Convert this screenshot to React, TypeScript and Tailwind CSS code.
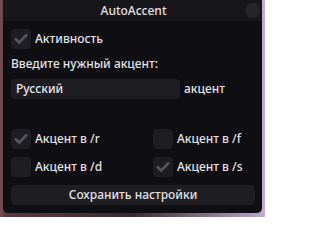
import React from "react";

function Check({ checked }: { checked: boolean }) {
  return (
    <div className="w-[20px] h-[20px] rounded-[4px] bg-[#1e1d22] flex items-center justify-center shrink-0">
      {checked && (
        <svg width="14" height="12" viewBox="0 0 14 12">
          <path d="M1.8 6.2 L5.2 9.6 L12.2 2.2" fill="none" stroke="#55545a" strokeWidth="2.8" strokeLinecap="round" strokeLinejoin="round" />
        </svg>
      )}
    </div>
  );
}

function CheckRow({ checked, label }: { checked: boolean; label: string }) {
  return (
    <div className="flex items-center h-[20px]">
      <Check checked={checked} />
      <span className="ml-[4px] leading-[20px]">{label}</span>
    </div>
  );
}

export default function App() {
  return (
    <div
      className="w-[265px] h-[217px] flex pl-[3px] pb-[4px] bg-[linear-gradient(90deg,#7a4f52_0%,#5a3a3c_2%,#3a2a30_50%,#b5a5c5_98%,#c2b2d0_100%)]"
      style={{ fontFamily: '"Noto Sans", sans-serif' }}
    >
      <div className="w-[259px] h-[213px] rounded-b-[5px] bg-[#0f0e12] text-[12px] font-medium text-[#e2e1e6] flex flex-col relative">
        <div className="h-[21px] bg-[#17161b] flex items-center justify-center shrink-0">
          <span className="leading-[21px] pl-[2px]">AutoAccent</span>
        </div>
        <div className="absolute right-[2px] top-[3px] w-[15px] h-[15px] rounded-full bg-[#26252a]" />
        <div className="flex flex-col px-[8px]">
          <div className="mt-[8px]">
            <CheckRow checked label="Активность" />
          </div>
          <div className="mt-[5px] h-[20px] leading-[20px]">Введите нужный акцент:</div>
          <div className="mt-[5px] flex items-center">
            <div className="w-[169px] h-[20px] rounded-[4px] bg-[#1e1d22] pl-[5px] leading-[20px] text-[#e8e7ec]">
              Русский
            </div>
            <span className="ml-[4px] leading-[20px]">акцент</span>
          </div>
          <div className="mt-[30px] grid grid-cols-[142px_1fr] gap-y-[8px]">
            <CheckRow checked label="Акцент в /r" />
            <CheckRow checked={false} label="Акцент в /f" />
            <CheckRow checked={false} label="Акцент в /d" />
            <CheckRow checked label="Акцент в /s" />
          </div>
          <div className="mt-[8px] w-[244px] h-[20px] rounded-[4px] bg-[#1e1d22] flex items-center justify-center">
            <span className="leading-[20px]">Сохранить настройки</span>
          </div>
        </div>
      </div>
    </div>
  );
}
